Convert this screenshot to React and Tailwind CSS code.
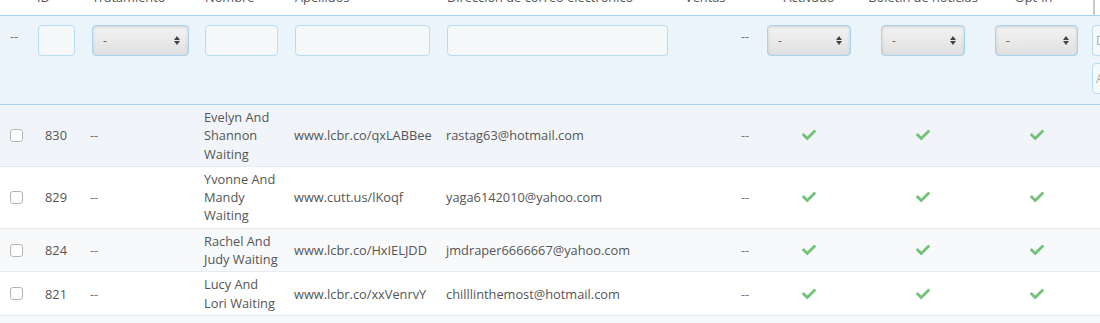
import React from "react";

const rows = [
  { id: 830, nombre: "Evelyn And Shannon Waiting", apellidos: "www.lcbr.co/qxLABBee", email: "rastag63@hotmail.com", bg: "bg-[#f1f5f9]" },
  { id: 829, nombre: "Yvonne And Mandy Waiting", apellidos: "www.cutt.us/lKoqf", email: "yaga6142010@yahoo.com", bg: "bg-white" },
  { id: 824, nombre: "Rachel And Judy Waiting", apellidos: "www.lcbr.co/HxIELJDD", email: "jmdraper6666667@yahoo.com", bg: "bg-[#f8f9fb]" },
  { id: 821, nombre: "Lucy And Lori Waiting", apellidos: "www.lcbr.co/xxVenrvY", email: "chilllinthemost@hotmail.com", bg: "bg-white" },
];

const cols = "grid grid-cols-[36px_44px_117px_90px_152px_238px_75px_114px_114px_107px_1fr]";

const Check = () => (
  <svg viewBox="0 0 512 512" className="w-[14px] h-[14px] fill-[#72c279]">
    <path d="M173.898 439.404l-166.4-166.4c-9.997-9.997-9.997-26.206 0-36.204l36.203-36.204c9.997-9.998 26.207-9.998 36.204 0L192 312.69 432.095 72.596c9.997-9.997 26.207-9.997 36.204 0l36.203 36.204c9.997 9.997 9.997 26.206 0 36.204l-294.4 294.401c-9.998 9.997-26.207 9.997-36.204-.001z" />
  </svg>
);

const FakeSelect = ({ w }) => (
  <div
    className={`${w} h-[31px] rounded-[4px] border border-[#a8d3ef] bg-gradient-to-b from-[#f3f3f3] to-[#e0e0e0] shadow-[inset_0_1px_3px_rgba(0,0,0,0.15)] flex items-center justify-between pl-[10px] pr-[8px]`}
  >
    <span className="text-[12px] text-[#666] leading-none">-</span>
    <span className="flex flex-col items-center gap-[1px]">
      <span className="w-0 h-0 border-l-[3px] border-r-[3px] border-b-[4px] border-l-transparent border-r-transparent border-b-[#444]" />
      <span className="w-0 h-0 border-l-[3px] border-r-[3px] border-t-[4px] border-l-transparent border-r-transparent border-t-[#444]" />
    </span>
  </div>
);

const Input = ({ w, placeholder }) => (
  <div className={`${w} h-[31px] rounded-[4px] border border-[#b9dcf2] bg-[#f5f8f9] flex items-center pl-[3px] text-[12px] text-[#aaa]`}>
    {placeholder}
  </div>
);

export default function App() {
  return (
    <div className="w-[1100px] h-[323px] overflow-hidden bg-white text-[12.8px] text-[#555] font-['Open_Sans',sans-serif]">
      {/* Header labels, scrolled mostly out of view */}
      <div className={`${cols} h-[16px] overflow-hidden border-b border-[#a8d3ef]`}>
        {[
          ["", "pl-0"],
          ["ID", "pl-[1px]"],
          ["Tratamiento", "pl-[12px]"],
          ["Nombre", "pl-[8px]"],
          ["Apellidos", "pl-[8px]"],
          ["Dirección de correo electrónico", "pl-[8px]"],
          ["Ventas", "pl-[8px]"],
          ["Activado", "text-center"],
          ["Boletín de noticias", "text-center"],
          ["Opt-in", "text-center"],
        ].map(([t, c], i) => (
          <div key={i} className={`${c} whitespace-nowrap leading-[18px] mt-[-12px]`}>
            {t}
          </div>
        ))}
        <div className="pl-[6px]">
          <div className="w-[2px] h-[15px] bg-[#c9c9c9]" />
        </div>
      </div>

      {/* Filter row */}
      <div className={`${cols} h-[89px] bg-[#ebf4fb] border-b border-[#a8d3ef] pt-[9px]`}>
        <div className="pl-[10px] pt-[2px] text-[#777] leading-[18px]">--</div>
        <div className="pl-[2px]"><Input w="w-[37px]" /></div>
        <div className="pl-[12px]"><FakeSelect w="w-[97px]" /></div>
        <div className="pl-[8px]"><Input w="w-[73px]" /></div>
        <div className="pl-[8px]"><Input w="w-[135px]" /></div>
        <div className="pl-[8px]"><Input w="w-[221px]" /></div>
        <div className="pl-[64px] pt-[2px] text-[#777] leading-[18px]">--</div>
        <div className="pl-[15px]"><FakeSelect w="w-[84px]" /></div>
        <div className="pl-[15px]"><FakeSelect w="w-[84px]" /></div>
        <div className="pl-[15px]"><FakeSelect w="w-[83px]" /></div>
        <div className="pl-[5px] flex flex-col gap-[7px]">
          <Input w="w-[40px]" placeholder="D" />
          <Input w="w-[40px]" placeholder="A" />
        </div>
      </div>

      {/* Data rows */}
      {rows.map((r) => (
        <div key={r.id} className={`${cols} ${r.bg} border-b border-[#e6eaee] py-[3px] items-center leading-[18.3px]`}>
          <div className="pl-[10px] flex items-center">
            <span className="w-[13px] h-[13px] rounded-[3px] border border-[#b5b5b5] bg-white" />
          </div>
          <div className="pl-[9px]">{r.id}</div>
          <div className="pl-[10px] text-[#777]">--</div>
          <div className="pl-[7px]"><div className="w-[76px]">{r.nombre}</div></div>
          <div className="pl-[7px] whitespace-nowrap">{r.apellidos}</div>
          <div className="pl-[7px] whitespace-nowrap">{r.email}</div>
          <div className="pl-[64px] text-[#777]">--</div>
          <div className="flex justify-center"><Check /></div>
          <div className="flex justify-center"><Check /></div>
          <div className="flex justify-center pl-[7px]"><Check /></div>
          <div />
        </div>
      ))}
      <div className="h-[10px] bg-[#f5f8fa]" />
    </div>
  );
}
